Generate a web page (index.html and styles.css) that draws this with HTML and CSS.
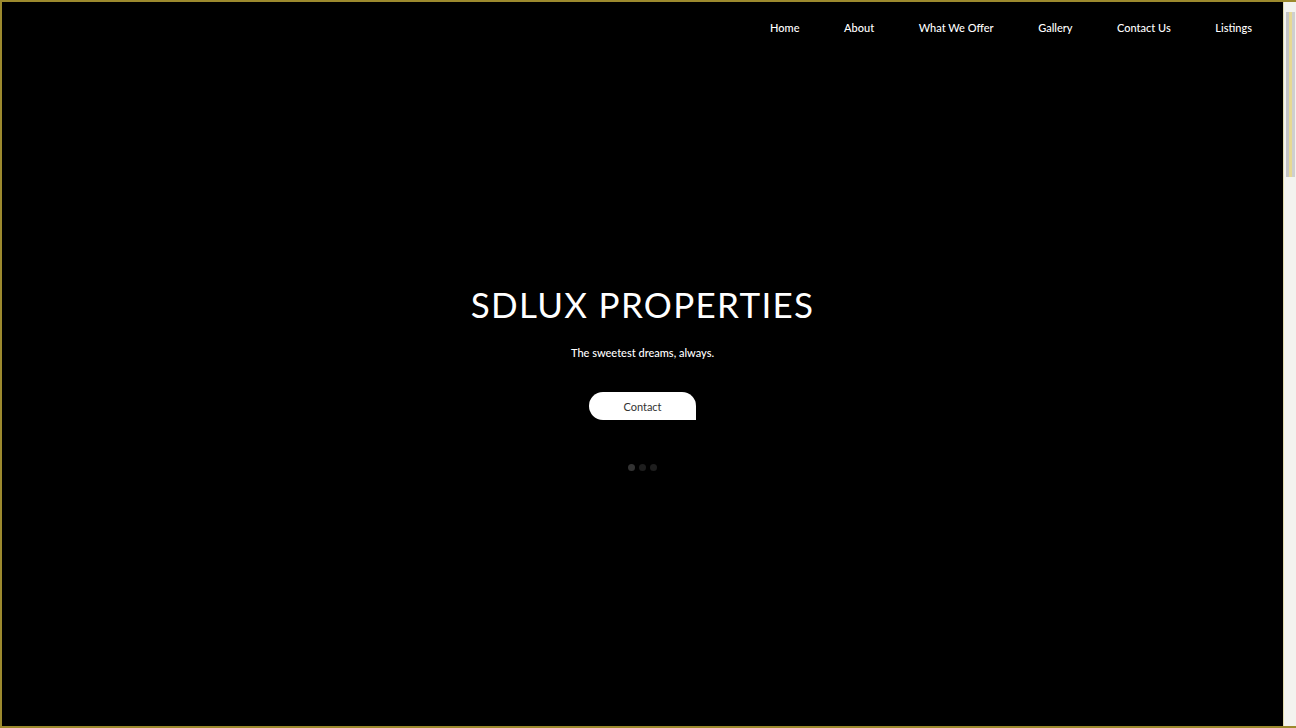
FILE: index.html
```html
<!DOCTYPE html>
<html lang="en">
<head>
<meta charset="utf-8">
<title>SDLUX Properties</title>
<link rel="stylesheet" href="styles.css">
</head>
<body>
<div class="frame">
  <main class="page">
    <header class="header">
      <nav class="nav">
        <a href="#" class="nav-link">Home</a>
        <a href="#" class="nav-link">About</a>
        <a href="#" class="nav-link">What We Offer</a>
        <a href="#" class="nav-link">Gallery</a>
        <a href="#" class="nav-link">Contact Us</a>
        <a href="#" class="nav-link">Listings</a>
      </nav>
    </header>
    <section class="hero">
      <h1 class="title">SDLUX PROPERTIES</h1>
      <p class="subtitle">The sweetest dreams, always.</p>
      <a href="#" class="btn">Contact</a>
      <div class="dots">
        <span class="dot dot-active"></span>
        <span class="dot"></span>
        <span class="dot"></span>
      </div>
    </section>
  </main>
  <div class="scrollbar"><div class="thumb"></div></div>
</div>
</body>
</html>
```
FILE: styles.css
```css
* { box-sizing: border-box; }
html, body { margin: 0; padding: 0; }
body {
  background: #000;
  font-family: "Lato", "Open Sans", sans-serif;
  overflow: hidden;
}
.frame {
  height: 728px;
  display: flex;
  border: 2px solid #9c8a2e;
  border-right: none;
}
.page {
  flex: 1;
  background: #000;
  color: #fff;
}
.header {
  height: 50px;
  display: flex;
  justify-content: flex-end;
  align-items: center;
  padding-right: 31px;
}
.nav {
  display: flex;
  gap: 44.6px;
}
.nav-link {
  color: #fff;
  text-decoration: none;
  font-size: 11px;
  font-weight: 500;
}
.hero {
  display: flex;
  flex-direction: column;
  align-items: center;
  padding-top: 230px;
}
.title {
  margin: 0;
  font-weight: 400;
  font-size: 35px;
  line-height: 44px;
  letter-spacing: 1.3px;
}
.subtitle {
  margin: 19px 0 0;
  font-size: 11px;
  font-weight: 500;
  line-height: 16px;
}
.btn {
  margin-top: 31px;
  width: 107px;
  height: 28px;
  display: flex;
  align-items: center;
  justify-content: center;
  background: #fff;
  color: #333;
  text-decoration: none;
  font-size: 11px;
  border-radius: 14px 14px 0 14px;
}
.dots {
  margin-top: 44px;
  display: flex;
  gap: 4px;
}
.dot {
  width: 7px;
  height: 7px;
  border-radius: 50%;
  background: #1e1e1e;
}
.dot-active { background: #333; }
.scrollbar {
  width: 13px;
  background: #f3f3ef;
  border-left: 1px solid #e2dcae;
  padding: 10px 1px 0 2px;
}
.thumb {
  height: 165px;
  background: linear-gradient(90deg, #c4c4c4 0 30%, #e6d994 30% 65%, #cfcfcf 65%);
}
```
